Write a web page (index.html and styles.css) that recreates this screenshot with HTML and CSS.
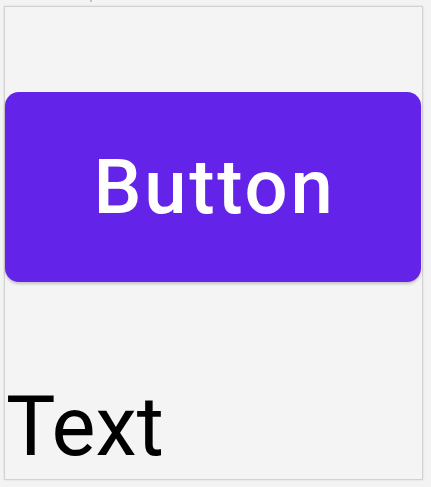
FILE: index.html
```html
<!DOCTYPE html>
<html>
<head>
<meta charset="utf-8">
<link rel="stylesheet" href="styles.css">
</head>
<body>
<span class="tick"></span>
<div class="frame">
  <button class="btn">Button</button>
  <div class="label">Text</div>
</div>
</body>
</html>
```
FILE: styles.css
```css
html, body {
  margin: 0;
  padding: 0;
  background: #f3f3f3;
  width: 431px;
  height: 487px;
  overflow: hidden;
}
.tick {
  position: absolute;
  left: 90px;
  top: 0;
  width: 2px;
  height: 2px;
  background: #c4c4c4;
}
.frame {
  box-sizing: border-box;
  margin: 6px 0 0 4px;
  width: 419px;
  height: 474px;
  border: 1px solid #d2d2d2;
  box-shadow: 0 0 2px rgba(0,0,0,0.12);
  background: #f4f4f4;
  padding-top: 85px;
  display: flex;
  flex-direction: column;
}
.btn {
  width: 416px;
  height: 190px;
  border: none;
  border-radius: 14px;
  background: #6423e9;
  color: #fff;
  font-family: Roboto, "Noto Sans", sans-serif;
  font-weight: 500;
  font-size: 76px;
  letter-spacing: 2.8px;
  padding: 0 0 0 3px;
  box-shadow: 0 2px 3px rgba(0,0,0,0.2);
  display: flex;
  align-items: center;
  justify-content: center;
}
.label {
  margin-top: 95px;
  margin-left: 1px;
  font-family: Roboto, "Noto Sans", sans-serif;
  font-size: 83px;
  line-height: 100px;
  color: #000;
}
```
